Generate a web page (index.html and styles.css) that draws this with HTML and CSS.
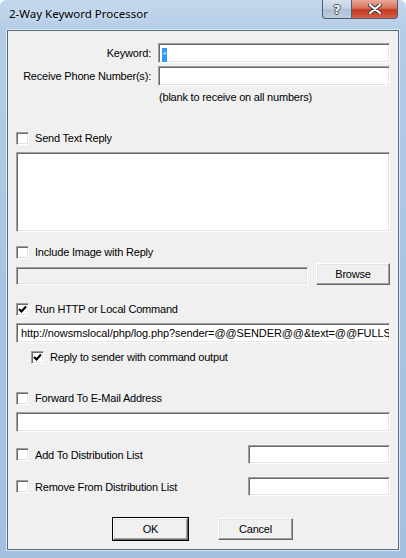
FILE: index.html
```html
<!DOCTYPE html>
<html lang="en">
<head>
    <meta charset="UTF-8">
    <title>2-Way Keyword Processor</title>
    <link rel="stylesheet" href="styles.css">
</head>
<body>
    <div class="window">
        <div class="titlebar">
            <span class="title">2-Way Keyword Processor</span>
            <div class="caption-btns">
                <div class="cap-btn help-btn">?</div>
                <div class="cap-btn close-btn">
                    <svg width="14" height="10" viewBox="0 0 14 10">
                        <path d="M2 1 L12 9 M12 1 L2 9" stroke="#3a3a3a" stroke-width="4" stroke-linecap="round"/>
                        <path d="M2 1 L12 9 M12 1 L2 9" stroke="#fff" stroke-width="2.2" stroke-linecap="round"/>
                    </svg>
                </div>
            </div>
        </div>

        <div class="client">
            <div class="field-row">
                <label class="field-label">Keyword:</label>
                <div class="edit"><span class="sel">*</span></div>
            </div>
            <div class="field-row phone-row">
                <label class="field-label">Receive Phone Number(s):</label>
                <div class="edit"></div>
            </div>
            <div class="hint">(blank to receive on all numbers)</div>

            <div class="check-row gap-lg">
                <span class="checkbox"></span>Send Text Reply
            </div>
            <div class="edit memo"></div>

            <div class="check-row gap-md">
                <span class="checkbox"></span>Include Image with Reply
            </div>
            <div class="browse-row">
                <div class="edit disabled"></div>
                <button class="btn browse-btn">Browse</button>
            </div>

            <div class="check-row gap-run">
                <span class="checkbox checked">
                    <svg width="9" height="9" viewBox="0 0 9 9"><path d="M1 4 L3.5 6.5 L8 1.5" fill="none" stroke="#000" stroke-width="2.2"/></svg>
                </span>Run HTTP or Local Command
            </div>
            <div class="edit url">http://nowsmslocal/php/log.php?sender=@@SENDER@@&amp;text=@@FULLSMS@@</div>
            <div class="check-row sub-check">
                <span class="checkbox checked">
                    <svg width="9" height="9" viewBox="0 0 9 9"><path d="M1 4 L3.5 6.5 L8 1.5" fill="none" stroke="#000" stroke-width="2.2"/></svg>
                </span>Reply to sender with command output
            </div>

            <div class="check-row gap-lg">
                <span class="checkbox"></span>Forward To E-Mail Address
            </div>
            <div class="edit email"></div>

            <div class="list-row gap-md">
                <div class="check-row"><span class="checkbox"></span>Add To Distribution List</div>
                <div class="edit small"></div>
            </div>
            <div class="list-row gap-md">
                <div class="check-row"><span class="checkbox"></span>Remove From Distribution List</div>
                <div class="edit small"></div>
            </div>

            <div class="dialog-btns">
                <button class="btn default-btn">OK</button>
                <button class="btn">Cancel</button>
            </div>
        </div>
    </div>
</body>
</html>
```

FILE: styles.css
```css
* {
    margin: 0;
    padding: 0;
    box-sizing: border-box;
}

body {
    width: 406px;
    height: 558px;
    overflow: hidden;
    font-family: 'Liberation Sans', Arial, sans-serif;
    font-size: 11px;
    letter-spacing: -0.2px;
    color: #000;
}

.window {
    width: 406px;
    height: 558px;
    background: linear-gradient(180deg, #c3d7ec 0%, #b4cce6 6%, #a9c4e2 50%, #a4c0e0 100%);
    border-radius: 6px 6px 0 0;
    padding: 0 7px 0 7px;
    display: flex;
    flex-direction: column;
}

/* Title bar */
.titlebar {
    height: 30px;
    display: flex;
    justify-content: space-between;
    align-items: flex-start;
}

.title {
    font-family: 'Noto Sans', 'Open Sans', sans-serif;
    font-size: 11.5px;
    letter-spacing: 0;
    margin: 6px 0 0 2px;
    color: #000;
    text-shadow: 0 0 6px #e8f0f8;
}

.caption-btns {
    display: flex;
    margin-right: 1px;
}

.cap-btn {
    height: 19px;
    border: 1px solid #4d5e73;
    border-top: none;
    display: flex;
    align-items: center;
    justify-content: center;
}

.help-btn {
    width: 29px;
    border-right: none;
    border-radius: 0 0 0 4px;
    background: linear-gradient(180deg, #d7e2ee 0%, #c0cfe0 50%, #aebfd3 51%, #bccde0 100%);
    font-family: 'DejaVu Sans', sans-serif;
    font-weight: bold;
    font-size: 13px;
    color: #f4f6f8;
    text-shadow: 1px 0 0 #555, -1px 0 0 #555, 0 1px 0 #555, 0 -1px 0 #555;
}

.close-btn {
    width: 47px;
    border-radius: 0 0 4px 0;
    background: linear-gradient(180deg, #e9a99b 0%, #d9705c 45%, #c4381d 55%, #d8614a 100%);
}

/* Client area */
.client {
    flex: 1;
    background: #f0f0f0;
    border: 1px solid #5a6b7f;
    box-shadow: 0 0 0 1px #dce8f4;
    margin-bottom: 8px;
    padding: 12px 8px 0 8px;
    display: flex;
    flex-direction: column;
}

.field-row {
    display: flex;
    align-items: center;
    gap: 7px;
}

.field-label {
    width: 135px;
    text-align: right;
}

.field-row .edit {
    flex: 1;
}

.phone-row {
    margin-top: 3px;
}

/* Sunken edit box */
.edit {
    height: 20px;
    background: #fff;
    border: 1px solid;
    border-color: #a0a0a0 #fff #fff #a0a0a0;
    box-shadow: inset 1px 1px 0 #696969, inset -1px -1px 0 #e3e3e3;
    padding: 2px 3px;
    line-height: 14px;
    white-space: nowrap;
    overflow: hidden;
}

.sel {
    display: inline-block;
    background: #3399ff;
    color: #fff;
    font-size: 8px;
    line-height: 14px;
    padding: 0 1px;
}

.hint {
    margin: 4px 0 0 143px;
    line-height: 14px;
}

.check-row {
    display: flex;
    align-items: center;
    height: 14px;
    line-height: 14px;
}

.checkbox {
    width: 13px;
    height: 13px;
    margin-right: 6px;
    background: #fff;
    border: 1px solid;
    border-color: #a0a0a0 #fff #fff #a0a0a0;
    box-shadow: inset 1px 1px 0 #696969, inset -1px -1px 0 #e3e3e3;
    display: flex;
    align-items: center;
    justify-content: center;
}

.gap-lg { margin-top: 27px; }
.gap-md { margin-top: 13px; }
.gap-run { margin-top: 17px; }

.memo {
    height: 80px;
    margin-top: 7px;
}

.browse-row {
    display: flex;
    align-items: flex-end;
    gap: 8px;
    margin-top: 4px;
}

.browse-row .edit {
    flex: 1;
    height: 18px;
}

.edit.disabled {
    background: #f0f0f0;
}

.url {
    margin-top: 7px;
    padding-left: 4px;
    letter-spacing: -0.1px;
}

.sub-check {
    margin: 7px 0 0 15px;
}

.email {
    margin-top: 7px;
}

.list-row {
    display: flex;
    justify-content: space-between;
    align-items: center;
}

.edit.small {
    width: 142px;
    height: 19px;
}

/* Raised push buttons */
.btn {
    width: 75px;
    height: 22px;
    background: #f0f0f0;
    font-family: 'Liberation Sans', Arial, sans-serif;
    font-size: 11px;
    letter-spacing: -0.2px;
    color: #000;
    border: 1px solid;
    border-color: #fff #696969 #696969 #fff;
    box-shadow: inset -1px -1px 0 #a0a0a0, inset 1px 1px 0 #e3e3e3;
}

.browse-btn {
    width: 74px;
}

.default-btn {
    outline: 1px solid #000;
}

.dialog-btns {
    display: flex;
    justify-content: center;
    gap: 30px;
    margin-top: 22px;
}
```
